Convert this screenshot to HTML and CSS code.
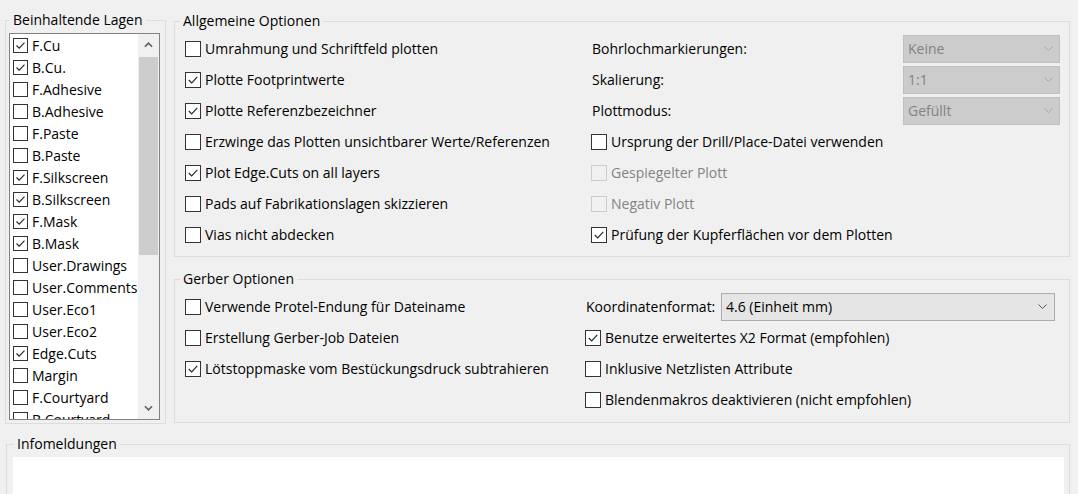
FILE: index.html
```html
<!DOCTYPE html>
<html lang="de">
<head>
<meta charset="utf-8">
<title>Plot</title>
<link rel="stylesheet" href="styles.css">
</head>
<body>
<div class="page">
  <div class="top">
    <fieldset class="group layers">
      <legend>Beinhaltende Lagen</legend>
      <div class="layers-body">
        <div class="listbox">
          <div class="items">
            <div class="item"><span class="cb"><svg viewBox="0 0 13 13"><path d="M2.5 6.5 L5.2 9.2 L10.5 3.6"/></svg></span>F.Cu</div>
            <div class="item"><span class="cb"><svg viewBox="0 0 13 13"><path d="M2.5 6.5 L5.2 9.2 L10.5 3.6"/></svg></span>B.Cu.</div>
            <div class="item"><span class="cb"></span>F.Adhesive</div>
            <div class="item"><span class="cb"></span>B.Adhesive</div>
            <div class="item"><span class="cb"></span>F.Paste</div>
            <div class="item"><span class="cb"></span>B.Paste</div>
            <div class="item"><span class="cb"><svg viewBox="0 0 13 13"><path d="M2.5 6.5 L5.2 9.2 L10.5 3.6"/></svg></span>F.Silkscreen</div>
            <div class="item"><span class="cb"><svg viewBox="0 0 13 13"><path d="M2.5 6.5 L5.2 9.2 L10.5 3.6"/></svg></span>B.Silkscreen</div>
            <div class="item"><span class="cb"><svg viewBox="0 0 13 13"><path d="M2.5 6.5 L5.2 9.2 L10.5 3.6"/></svg></span>F.Mask</div>
            <div class="item"><span class="cb"><svg viewBox="0 0 13 13"><path d="M2.5 6.5 L5.2 9.2 L10.5 3.6"/></svg></span>B.Mask</div>
            <div class="item"><span class="cb"></span>User.Drawings</div>
            <div class="item"><span class="cb"></span>User.Comments</div>
            <div class="item"><span class="cb"></span>User.Eco1</div>
            <div class="item"><span class="cb"></span>User.Eco2</div>
            <div class="item"><span class="cb"><svg viewBox="0 0 13 13"><path d="M2.5 6.5 L5.2 9.2 L10.5 3.6"/></svg></span>Edge.Cuts</div>
            <div class="item"><span class="cb"></span>Margin</div>
            <div class="item"><span class="cb"></span>F.Courtyard</div>
            <div class="item"><span class="cb"></span>B.Courtyard</div>
          </div>
          <div class="scrollbar">
            <div class="sb-btn"><svg viewBox="0 0 10 6"><path d="M1 5 L5 1 L9 5"/></svg></div>
            <div class="sb-track"><div class="sb-thumb"></div></div>
            <div class="sb-btn"><svg viewBox="0 0 10 6"><path d="M1 1 L5 5 L9 1"/></svg></div>
          </div>
        </div>
      </div>
    </fieldset>

    <div class="right">
      <fieldset class="group general">
        <legend>Allgemeine Optionen</legend>
        <div class="general-body">
          <div class="col">
            <div class="row"><span class="cb"></span>Umrahmung und Schriftfeld plotten</div>
            <div class="row"><span class="cb"><svg viewBox="0 0 14 14"><path d="M2.8 7 L5.7 9.9 L11.3 3.9"/></svg></span>Plotte Footprintwerte</div>
            <div class="row"><span class="cb"><svg viewBox="0 0 14 14"><path d="M2.8 7 L5.7 9.9 L11.3 3.9"/></svg></span>Plotte Referenzbezeichner</div>
            <div class="row"><span class="cb"></span>Erzwinge das Plotten unsichtbarer Werte/Referenzen</div>
            <div class="row"><span class="cb"><svg viewBox="0 0 14 14"><path d="M2.8 7 L5.7 9.9 L11.3 3.9"/></svg></span>Plot Edge.Cuts on all layers</div>
            <div class="row"><span class="cb"></span>Pads auf Fabrikationslagen skizzieren</div>
            <div class="row"><span class="cb"></span>Vias nicht abdecken</div>
          </div>
          <div class="col">
            <div class="row field"><span class="flabel">Bohrlochmarkierungen:</span><span class="select disabled"><span class="sval">Keine</span><svg viewBox="0 0 9 5"><path d="M0.5 0.5 L4.5 4.5 L8.5 0.5"/></svg></span></div>
            <div class="row field"><span class="flabel">Skalierung:</span><span class="select disabled"><span class="sval">1:1</span><svg viewBox="0 0 9 5"><path d="M0.5 0.5 L4.5 4.5 L8.5 0.5"/></svg></span></div>
            <div class="row field"><span class="flabel">Plottmodus:</span><span class="select disabled"><span class="sval">Gefüllt</span><svg viewBox="0 0 9 5"><path d="M0.5 0.5 L4.5 4.5 L8.5 0.5"/></svg></span></div>
            <div class="row"><span class="cb"></span>Ursprung der Drill/Place-Datei verwenden</div>
            <div class="row off"><span class="cb"></span>Gespiegelter Plott</div>
            <div class="row off"><span class="cb"></span>Negativ Plott</div>
            <div class="row"><span class="cb"><svg viewBox="0 0 14 14"><path d="M2.8 7 L5.7 9.9 L11.3 3.9"/></svg></span>Prüfung der Kupferflächen vor dem Plotten</div>
          </div>
        </div>
      </fieldset>

      <fieldset class="group gerber">
        <legend>Gerber Optionen</legend>
        <div class="gerber-body">
          <div class="col">
            <div class="row clip"><span class="cb"></span>Verwende Protel-Endung für Dateiname</div>
            <div class="row"><span class="cb"></span>Erstellung Gerber-Job Dateien</div>
            <div class="row"><span class="cb"><svg viewBox="0 0 14 14"><path d="M2.8 7 L5.7 9.9 L11.3 3.9"/></svg></span>Lötstoppmaske vom Bestückungsdruck subtrahieren</div>
          </div>
          <div class="col">
            <div class="row field"><span class="flabel">Koordinatenformat:</span><span class="select wide"><span class="sval">4.6 (Einheit mm)</span><svg viewBox="0 0 9 5"><path d="M0.5 0.5 L4.5 4.5 L8.5 0.5"/></svg></span></div>
            <div class="row"><span class="cb"><svg viewBox="0 0 14 14"><path d="M2.8 7 L5.7 9.9 L11.3 3.9"/></svg></span>Benutze erweitertes X2 Format (empfohlen)</div>
            <div class="row"><span class="cb"></span>Inklusive Netzlisten Attribute</div>
            <div class="row"><span class="cb"></span>Blendenmakros deaktivieren (nicht empfohlen)</div>
          </div>
        </div>
      </fieldset>
    </div>
  </div>

  <fieldset class="group info">
    <legend>Infomeldungen</legend>
    <div class="info-body">
      <div class="messages"></div>
    </div>
  </fieldset>
</div>
</body>
</html>
```

FILE: styles.css
```css
html, body {
  margin: 0;
  background: #f0f0f0;
}

body {
  font-family: "Open Sans", "Noto Sans", sans-serif;
  font-size: 14px;
  color: #000;
  overflow: hidden;
}

.page {
  padding: 10px 8px 0 5px;
}

.top {
  display: flex;
  gap: 8px;
  align-items: flex-start;
}

.group {
  margin: 0;
  padding: 0;
  border: 1px solid #dcdcdc;
  min-width: 0;
}

.group legend {
  padding: 0 3px;
  margin-left: 4px;
  line-height: 20px;
  height: 20px;
  white-space: nowrap;
}

/* ---------- layers ---------- */
.layers {
  width: 161px;
  box-sizing: border-box;
  flex: none;
}

.layers-body {
  padding: 3px 5px 3px 3px;
}

.listbox {
  height: 387px;
  box-sizing: border-box;
  border: 1px solid #828282;
  background: #fff;
  display: flex;
}

.items {
  flex: 1;
  overflow: hidden;
}

.item {
  height: 22px;
  display: flex;
  align-items: center;
  padding-left: 3px;
  white-space: nowrap;
}

.cb {
  flex: none;
  width: 16px;
  height: 16px;
  box-sizing: border-box;
  border: 1px solid #333;
  background: #fff;
  margin-right: 4px;
  display: flex;
}

.cb svg {
  width: 100%;
  height: 100%;
  fill: none;
  stroke: #222;
  stroke-width: 1.1;
}

.item .cb {
  width: 15px;
  height: 15px;
}

.scrollbar {
  flex: none;
  width: 21px;
  background: #f0f0f0;
  display: flex;
  flex-direction: column;
}

.sb-btn {
  height: 22px;
  display: flex;
  align-items: center;
  justify-content: center;
}

.sb-btn svg {
  width: 9px;
  height: 6px;
  fill: none;
  stroke: #606060;
  stroke-width: 1.8;
}

.sb-track {
  flex: 1;
  padding: 1px 1px 0 1px;
}

.sb-thumb {
  height: 198px;
  background: #cdcdcd;
}

/* ---------- right side ---------- */
.right {
  width: 896px;
  margin-top: 1px;
  display: flex;
  flex-direction: column;
  gap: 12px;
}

.right .group legend {
  margin-left: 5px;
}

.general-body {
  padding: 2px 9px 6px 10px;
  display: grid;
  grid-template-columns: 406px 1fr;
}

.gerber-body {
  padding: 2px 14px 7px 10px;
  display: grid;
  grid-template-columns: 400px 1fr;
}

.col {
  display: flex;
  flex-direction: column;
  min-width: 0;
}

.row {
  height: 31px;
  display: flex;
  align-items: center;
  white-space: nowrap;
}

.row.clip {
  width: 280px;
  overflow: hidden;
}

.row.off {
  color: #838383;
}

.row.off .cb {
  border-color: #cccccc;
  background: #f0f0f0;
}

.field {
  justify-content: space-between;
}

.flabel {
  padding-left: 1px;
}

.select {
  height: 28px;
  width: 157px;
  box-sizing: border-box;
  border: 1px solid #adadad;
  background: #e5e5e5;
  display: flex;
  align-items: center;
  justify-content: space-between;
  padding: 0 6px 0 4px;
}

.select svg {
  width: 9px;
  height: 5px;
  fill: none;
  stroke: #555;
  stroke-width: 1;
}

.select.disabled {
  background: #cccccc;
  border-color: #bfbfbf;
  color: #838383;
}

.select.disabled svg {
  stroke: #a6a6a6;
}

.select.wide {
  width: 334px;
  padding-right: 7px;
}

/* ---------- info ---------- */
.info {
  margin: 10px 0 0 1px;
}

.info legend {
  margin-left: 7px;
}

.info-body {
  padding: 3px 5px 0 6px;
}

.messages {
  height: 60px;
  background: #fff;
}
```
